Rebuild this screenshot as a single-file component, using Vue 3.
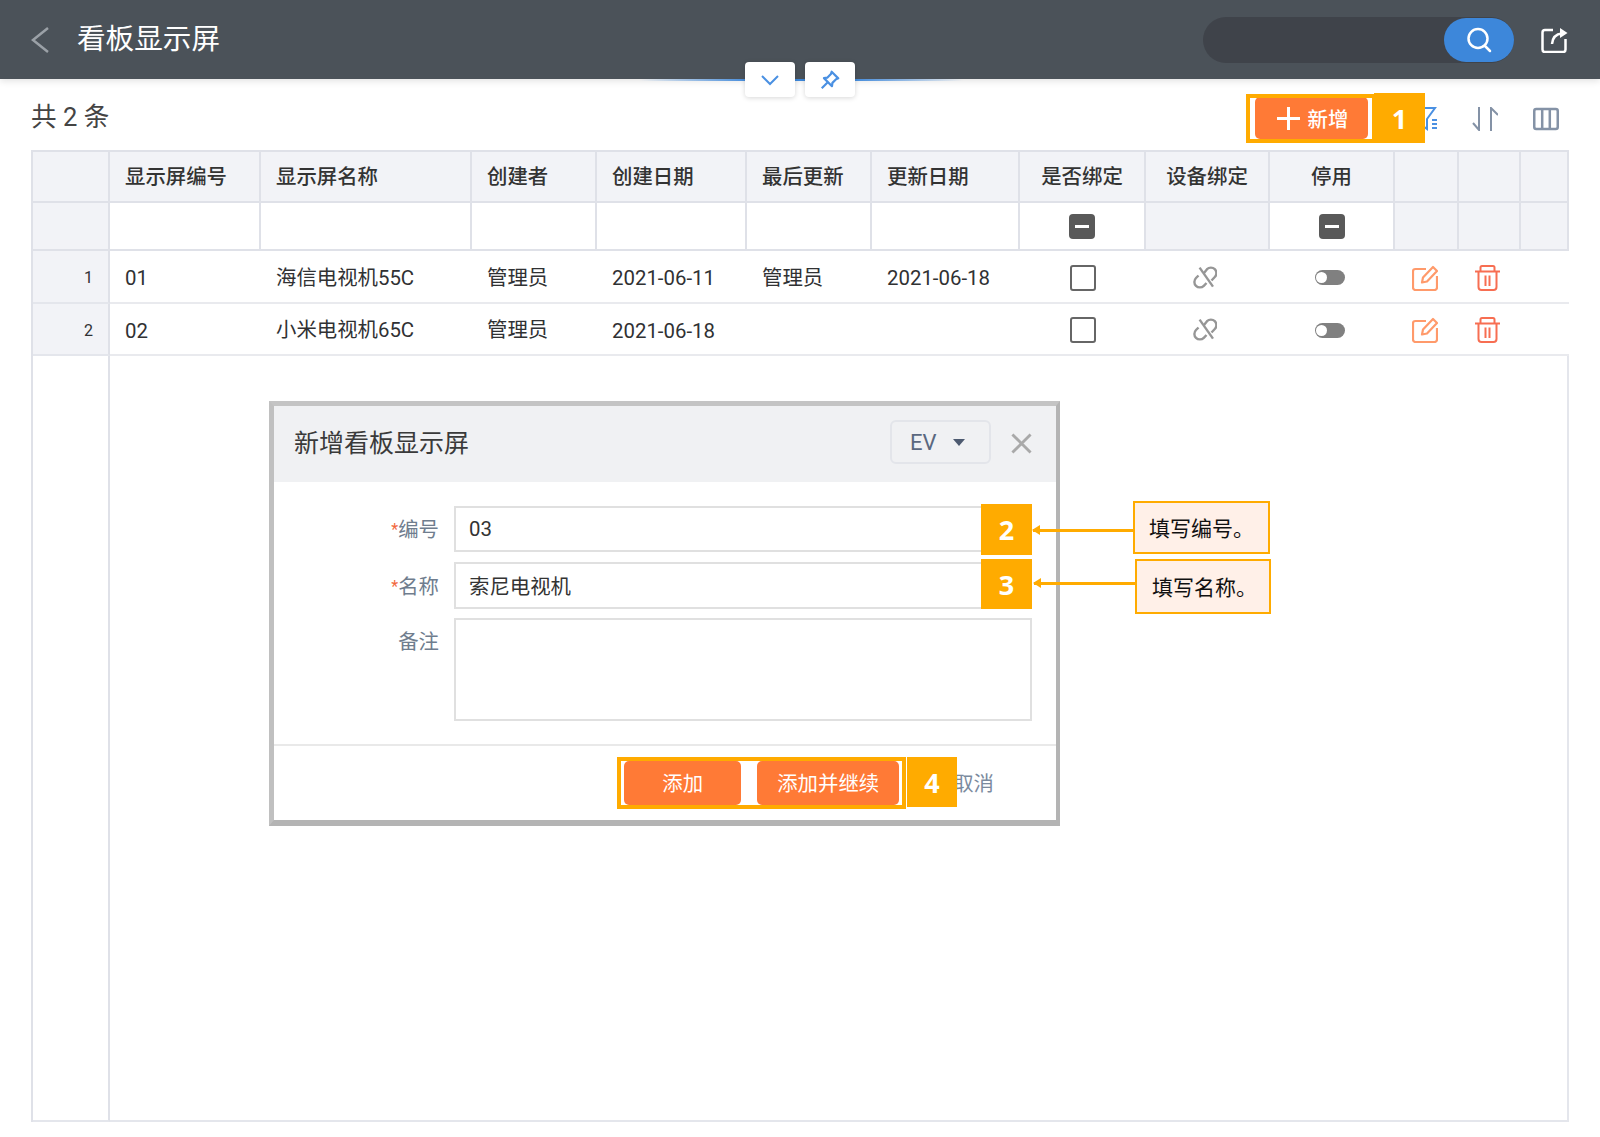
<script setup>
const headers = [
  { text: '', },
  { text: '显示屏编号' },
  { text: '显示屏名称' },
  { text: '创建者' },
  { text: '创建日期' },
  { text: '最后更新' },
  { text: '更新日期' },
  { text: '是否绑定', center: true },
  { text: '设备绑定', center: true },
  { text: '停用', center: true },
  { text: '' },
  { text: '' },
  { text: '' },
]
const filterCells = [
  { gray: true }, {}, {}, {}, {}, {}, {},
  { minus: true },
  { gray: true },
  { minus: true },
  { gray: true }, { gray: true }, { gray: true },
]
const rows = [
  { no: 1, code: '01', name: '海信电视机55C', by: '管理员', date: '2021-06-11', upBy: '管理员', upDate: '2021-06-18' },
  { no: 2, code: '02', name: '小米电视机65C', by: '管理员', date: '2021-06-18', upBy: '', upDate: '' },
]
</script>

<template>
  <div class="page">
    <header class="topbar">
      <svg class="back" viewBox="0 0 18 26"><path d="M17 1 2 13l15 12" /></svg>
      <h1 class="title">看板显示屏</h1>
      <div class="search">
        <button class="search-btn">
          <svg viewBox="0 0 28 28" class="search-ic"><circle cx="13" cy="12.500" r="9.500" /><path d="m20 20 5 5" /></svg>
        </button>
      </div>
      <svg class="share" viewBox="0 0 28 26"><path d="M12 3H4Q1.500 3 1.500 5.500v17Q1.500 25 4 25h18q2.500 0 2.500-2.500V12" /><path d="M11 17c.5-6 4-10 10-10.500" /><path d="M19 1l7.500 5L19 11z" class="solid" /></svg>
      <div class="topline"></div>
      <div class="float-btns">
        <button class="float-btn">
          <svg viewBox="0 0 20 12" class="chev"><path d="m2 2 8 8 8-8" /></svg>
        </button>
        <button class="float-btn">
          <svg viewBox="0 0 20 20" class="pin"><path d="M11.500 2.500 17.500 8.500l-2 .8-3.300 3.300-.4 3L4.500 8.300l3-.4 3.300-3.300zM7.500 12.500 2.500 17.500" /></svg>
        </button>
      </div>
    </header>

    <div class="toolbar">
      <div class="count">共 2 条</div>
      <div class="tools">
        <button class="add-btn"><span class="plus"></span>新增</button>
        <svg class="tool filter-ic" viewBox="0 0 26 24"><path d="M3 1h21L16 12v10l-4-3" /><path d="M21 13h5M21 17h5M21 21h5" /></svg>
        <svg class="tool sort-ic" viewBox="0 0 26 24"><path d="M7 0v23L1 16" /><path d="M19 24V1l7 7" /></svg>
        <svg class="tool cols-ic" viewBox="0 0 26 24"><rect x="1.250" y="2" width="23.500" height="20" rx="2" /><path d="M9.200 2v20M16.800 2v20" /></svg>
      </div>
    </div>

    <div class="grid">
      <div v-for="(h, i) in headers" :key="'h' + i" class="cell head" :class="{ center: h.center }">{{ h.text }}</div>

      <div v-for="(f, i) in filterCells" :key="'f' + i" class="cell filter" :class="{ gray: f.gray }">
        <span v-if="f.minus" class="minus"></span>
      </div>

      <template v-for="r in rows" :key="r.no">
        <div class="cell gray rowno">{{ r.no }}</div>
        <div class="cell body latin">{{ r.code }}</div>
        <div class="cell body cjk">{{ r.name }}</div>
        <div class="cell body cjk">{{ r.by }}</div>
        <div class="cell body latin">{{ r.date }}</div>
        <div class="cell body cjk">{{ r.upBy }}</div>
        <div class="cell body latin">{{ r.upDate }}</div>
        <div class="cell body center"><span class="check"></span></div>
        <div class="cell body center">
          <svg class="link-ic" viewBox="0 0 24 24"><path d="M11 7l3-3.800A5.500 5.500 0 0 1 21.800 11l-3.300 3.500" /><path d="M5.500 9.500 3 12a5.500 5.500 0 0 0 7.800 7.800l2.700-2.800" /><path d="M6.600 1.600 20 20.600" /></svg>
        </div>
        <div class="cell body center"><span class="toggle"></span></div>
        <div class="cell body center shift">
          <svg class="edit-ic" viewBox="0 0 26 26"><path d="M14 4H3.500Q1 4 1 6.500v16Q1 25 3.500 25h19q2.500 0 2.500-2.500V11" /><path d="M10 17.500 11 12.500 21 2l4 4-10 10.500z" /></svg>
        </div>
        <div class="cell body center shift">
          <svg class="trash-ic" viewBox="0 0 26 26"><path d="M0 6.500h25M5.500 6.500V2.500q0-1.500 1.500-1.500h11q1.500 0 1.500 1.500v4" /><path d="M3.500 6.500V22q0 3 3 3h12q3 0 3-3V6.500" /><path d="M10.500 10.500V21M14.500 10.500V21" /></svg>
        </div>
        <div class="cell body"></div>
      </template>

      <div class="cell rest-left"></div>
      <div class="cell rest-right"></div>
    </div>

    <section class="dialog">
      <div class="dlg-head">
        <div class="dlg-title">新增看板显示屏</div>
        <div class="ev">EV<span class="caret"></span></div>
        <svg class="close" viewBox="0 0 22 22"><path d="M1.500 1.500l19 19M20.500 1.500l-19 19" /></svg>
      </div>
      <div class="dlg-body">
        <div class="form-row">
          <label class="lbl"><i>*</i>编号</label>
          <div class="input">03</div>
        </div>
        <div class="form-row r2">
          <label class="lbl"><i>*</i>名称</label>
          <div class="input cjk">索尼电视机</div>
        </div>
        <div class="form-row r3">
          <label class="lbl top">备注</label>
          <div class="input area"></div>
        </div>
      </div>
      <div class="dlg-foot">
        <button class="act first">添加</button>
        <button class="act second">添加并继续</button>
        <span class="cancel">取消</span>
      </div>
    </section>

    <div class="mark outline o1"></div>
    <div class="mark num n1">1</div>
    <div class="mark num n2">2</div>
    <div class="mark num n3">3</div>
    <div class="mark outline o4"></div>
    <div class="mark num n4">4</div>
    <div class="mark arrow a1"></div>
    <div class="mark arrow a2"></div>
    <div class="mark note t1">填写编号。</div>
    <div class="mark note t2">填写名称。</div>
  </div>
</template>

<style scoped>
.page {
  position: relative;
  width: 1600px;
  height: 1137px;
  overflow: hidden;
  background: #fff;
  font-family: Roboto, "Noto Sans CJK SC", sans-serif;
  color: #303133;
}
button { font-family: inherit; border: 0; padding: 0; }

/* top bar */
.topbar {
  position: relative;
  display: flex;
  align-items: center;
  height: 79px;
  padding: 0 31px;
  box-sizing: border-box;
  background: #4b5259;
  box-shadow: 0 2px 7px rgba(0, 0, 0, .12);
}
.back { width: 18px; height: 26px; fill: none; stroke: #9ba1a7; stroke-width: 2.500; }
.title { margin: 0 0 0 28px; font-size: 28.600px; font-weight: 400; line-height: 1; color: #fff; }
.search {
  margin-left: auto;
  display: flex;
  justify-content: flex-end;
  align-items: center;
  width: 311px;
  height: 46px;
  border-radius: 23px;
  background: #3f434a;
}
.search-btn {
  display: flex;
  align-items: center;
  justify-content: center;
  width: 70px;
  height: 44px;
  border-radius: 22px;
  background: #3d87da;
}
.search-ic { width: 28px; height: 28px; fill: none; stroke: #fff; stroke-width: 2.500; stroke-linecap: round; }
.share { width: 28px; height: 26px; margin-left: 27px; fill: none; stroke: #fff; stroke-width: 2.500; }
.share .solid { fill: #fff; stroke: none; }
.topline {
  position: absolute;
  left: 640px;
  bottom: -2px;
  width: 323px;
  height: 2px;
  background: linear-gradient(90deg, rgba(61, 135, 218, 0), #3d87da 35%, #3d87da 65%, rgba(61, 135, 218, 0));
}
.float-btns {
  position: absolute;
  left: 745px;
  top: 62px;
  display: flex;
  gap: 10px;
}
.float-btn {
  display: flex;
  align-items: center;
  justify-content: center;
  width: 50px;
  height: 35px;
  border-radius: 4px;
  background: #fff;
  box-shadow: 0 1px 5px rgba(0, 0, 0, .16);
}
.chev { width: 20px; height: 12px; fill: none; stroke: #4a90e2; stroke-width: 2; }
.pin { width: 22px; height: 22px; fill: none; stroke: #4a90e2; stroke-width: 2; stroke-linejoin: round; }

/* toolbar */
.toolbar {
  display: flex;
  align-items: center;
  justify-content: space-between;
  height: 71px;
  padding: 0 41px 0 31px;
  box-sizing: border-box;
}
.count { font-size: 25.600px; color: #444; }
.tools { display: flex; align-items: center; margin-top: 7px; }
.add-btn {
  display: flex;
  align-items: center;
  justify-content: center;
  gap: 8px;
  width: 113px;
  height: 42px;
  padding-left: 2px;
  border-radius: 5px;
  background: #ff7a36;
  color: #fff;
  font-size: 20.400px;
  font-weight: 500;
}
.plus { position: relative; width: 23px; height: 23px; }
.plus::before, .plus::after { content: ""; position: absolute; background: #fff; }
.plus::before { left: 0; right: 0; top: 10px; height: 3px; }
.plus::after { top: 0; bottom: 0; left: 10px; width: 3px; }
.tool { width: 26px; height: 24px; margin-top: 2px; fill: none; stroke: #8492a6; stroke-width: 2; }
.filter-ic { margin-left: 43px; stroke: #4a90e2; }
.sort-ic { margin-left: 35px; }
.cols-ic { margin-left: 35px; stroke-width: 2.500; }

/* table */
.grid {
  display: grid;
  grid-template-columns: 77px 151px 211px 125px 150px 125px 148px 126px 124px 125px 64px 62px 48px;
  grid-template-rows: 51px 48px 53px 52px 1fr;
  width: 1538px;
  height: 972px;
  margin-left: 31px;
  box-sizing: border-box;
  border-left: 2px solid #dfe1e8;
  border-top: 2px solid #dfe1e8;
}
.cell {
  display: flex;
  align-items: center;
  min-width: 0;
  box-sizing: border-box;
  border-right: 2px solid #dfe1e8;
  border-bottom: 2px solid #dfe1e8;
  font-size: 20.400px;
  white-space: nowrap;
}
.gray { background: #f2f3f7; }
.head { background: #f2f3f7; padding-left: 15px; padding-bottom: 4px; font-weight: 500; color: #333; }
.head.center { padding-left: 0; justify-content: center; }
.filter { justify-content: center; }
.minus {
  position: relative;
  width: 26px;
  height: 25px;
  border-radius: 4px;
  background: #595959;
}
.minus::after {
  content: "";
  position: absolute;
  left: 6px;
  right: 6px;
  top: 11px;
  height: 3px;
  background: #fff;
}
.body { padding-left: 15px; padding-top: 2px; border-right: 0; border-bottom-color: #e9eaee; }
.latin { padding-top: 3px; }
.body.cjk { padding-top: 0; padding-bottom: 2px; }
.rowno {
  justify-content: flex-end;
  padding-right: 15px;
  padding-top: 2px;
  font-size: 16px;
  border-bottom-color: #e4e6ec;
}
.center { justify-content: center; padding-left: 0; }
.check {
  width: 26px;
  height: 26px;
  box-sizing: border-box;
  border: 2px solid #666;
  border-radius: 3px;
  background: #fff;
}
.link-ic { width: 24px; height: 24px; margin-right: 7px; fill: none; stroke: #969696; stroke-width: 2.400; }
.toggle {
  position: relative;
  width: 30px;
  height: 15px;
  margin-right: 5px;
  border-radius: 8px;
  background: #808080;
}
.toggle::after {
  content: "";
  position: absolute;
  left: 1px;
  top: 2px;
  width: 11px;
  height: 11px;
  border-radius: 50%;
  background: #fff;
}
.shift { justify-content: flex-start; }
.edit-ic { width: 26px; height: 26px; margin-left: 17px; fill: none; stroke: #ff9a6b; stroke-width: 2.200; stroke-linejoin: round; }
.trash-ic { width: 26px; height: 26px; margin-left: 16px; fill: none; stroke: #f76e52; stroke-width: 2; }
.rest-left { border-bottom-color: #e4e6ec; }
.rest-right { grid-column: 2 / -1; border-color: #e4e6ec; }

/* dialog */
.dialog {
  position: absolute;
  left: 269px;
  top: 401px;
  width: 791px;
  height: 425px;
  display: flex;
  flex-direction: column;
  box-sizing: border-box;
  background: #fff;
  border-style: solid;
  border-width: 5px 4px 6px 5px;
  border-color: #c4c4c4 #b4b4b4 #b4b4b4 #c0c0c0;
}
.dlg-head {
  display: flex;
  align-items: center;
  height: 76px;
  flex: none;
  padding: 0 24px 4px 20px;
  box-sizing: border-box;
  background: #f0f1f3;
}
.dlg-title { font-size: 25px; color: #3a3a3a; margin-right: auto; margin-bottom: 2px; }
.ev {
  display: flex;
  align-items: center;
  width: 101px;
  height: 44px;
  padding-left: 18px;
  box-sizing: border-box;
  border: 2px solid #e3e5ea;
  border-radius: 6px;
  font-size: 22px;
  color: #5a6880;
}
.caret {
  width: 0;
  height: 0;
  margin-left: 16px;
  border-left: 6px solid transparent;
  border-right: 6px solid transparent;
  border-top: 7px solid #4d5a70;
}
.close { width: 21px; height: 21px; margin-left: 20px; margin-top: 2px; fill: none; stroke: #a9a9a9; stroke-width: 3; }
.dlg-body {
  height: 264px;
  flex: none;
  padding: 24px 24px 0 0;
  box-sizing: border-box;
  border-bottom: 2px solid #e9e9e9;
}
.form-row { display: flex; align-items: center; height: 46px; }
.r2 { height: 47px; margin-top: 10px; }
.r3 { height: 103px; margin-top: 9px; align-items: flex-start; }
.lbl {
  width: 165px;
  flex: none;
  padding-bottom: 2px;
  text-align: right;
  font-size: 20.400px;
  color: #6f7d8e;
}
.lbl.top { margin-top: 7px; }
.lbl i { font-style: normal; color: #f2683e; font-size: 16px; vertical-align: 2px; }
.input {
  flex: 1;
  height: 100%;
  margin-left: 15px;
  display: flex;
  align-items: center;
  padding-left: 13px;
  box-sizing: border-box;
  border: 2px solid #e0e0e0;
  font-size: 20.400px;
  color: #333;
}
.input.cjk { padding-bottom: 2px; }
.dlg-foot {
  flex: 1;
  display: flex;
  align-items: center;
  justify-content: flex-end;
  padding-right: 62px;
}
.act {
  height: 44px;
  padding-bottom: 2px;
  border-radius: 5px;
  background: #ff7a36;
  color: #fff;
  font-size: 20.400px;
}
.first { width: 117px; }
.second { width: 142px; margin-left: 16px; }
.cancel { margin-left: 54px; margin-bottom: 2px; font-size: 20.400px; color: #7b8a9e; }

/* annotation overlays */
.mark { position: absolute; box-sizing: border-box; }
.outline { border: 4px solid #ffab00; }
.o1 { left: 1246px; top: 94px; width: 130px; height: 49px; }
.o4 { left: 617px; top: 757px; width: 289px; height: 52px; }
.num {
  display: flex;
  align-items: center;
  justify-content: center;
  background: #ffab00;
  color: #fff;
  font-family: "Noto Sans", sans-serif;
  font-size: 27px;
  font-weight: 700;
  line-height: 1;
}
.n1 { left: 1374px; top: 93px; width: 51px; height: 50px; }
.n2 { left: 981px; top: 504px; width: 51px; height: 51px; }
.n3 { left: 981px; top: 559px; width: 51px; height: 50px; }
.n4 { left: 907px; top: 757px; width: 50px; height: 50px; }
.arrow { height: 3px; background: #ffab00; }
.arrow::before {
  content: "";
  position: absolute;
  left: -1px;
  top: -4px;
  border-top: 5.500px solid transparent;
  border-bottom: 5.500px solid transparent;
  border-right: 8px solid #ffab00;
}
.a1 { left: 1033px; top: 529px; width: 102px; }
.a2 { left: 1034px; top: 582px; width: 103px; }
.note {
  display: flex;
  align-items: center;
  border: 2px solid #ffab00;
  background: #fff0e8;
  font-family: "Noto Sans CJK SC", sans-serif;
  font-size: 21px;
  color: #111;
  padding-bottom: 2px;
}
.t1 { left: 1133px; top: 501px; width: 137px; height: 53px; padding-left: 14px; }
.t2 { left: 1135px; top: 559px; width: 136px; height: 55px; padding-left: 15px; }
</style>
